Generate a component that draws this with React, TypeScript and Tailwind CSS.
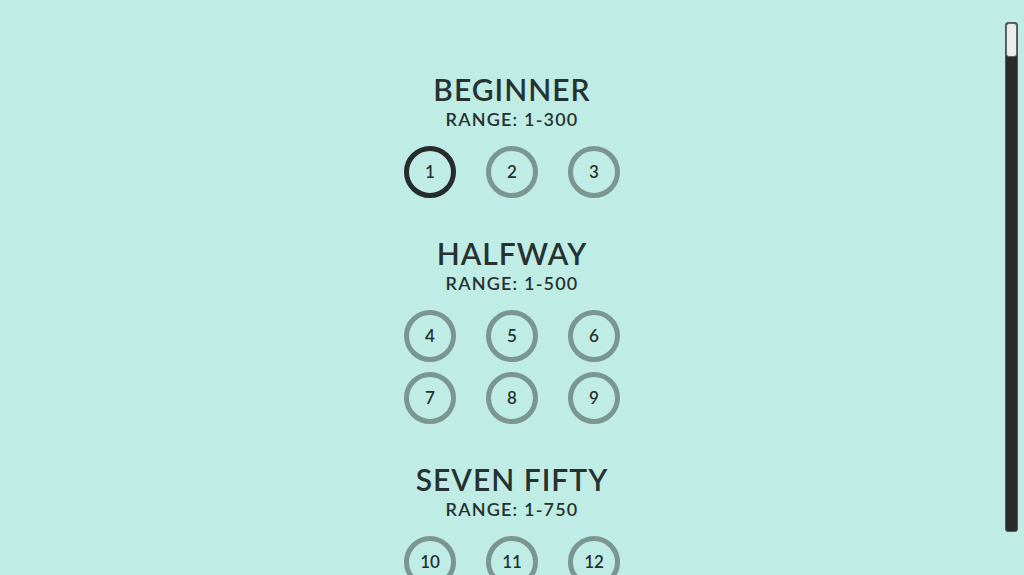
import React from 'react'

type Level = {
  title: string
  range: string
  puzzles: number[]
}

const levels: Level[] = [
  { title: 'BEGINNER', range: 'RANGE: 1-300', puzzles: [1, 2, 3] },
  { title: 'HALFWAY', range: 'RANGE: 1-500', puzzles: [4, 5, 6, 7, 8, 9] },
  { title: 'SEVEN FIFTY', range: 'RANGE: 1-750', puzzles: [10, 11, 12, 13, 14, 15] },
]

function PuzzleButton({ n, active }: { n: number; active?: boolean }) {
  return (
    <button
      className={
        'w-[52px] h-[52px] rounded-full border-[5px] flex items-center justify-center text-[17px] font-semibold text-[#263230] ' +
        (active ? 'border-[#262b2b]' : 'border-[#7b9591]')
      }
    >
      {n}
    </button>
  )
}

function LevelSection({ level, first }: { level: Level; first?: boolean }) {
  return (
    <section className={'flex flex-col items-center ' + (first ? '' : 'mt-[37px]')}>
      <h2 className="text-[30px] leading-[36px] font-semibold tracking-[1px] text-[#263230]">
        {level.title}
      </h2>
      <p className="text-[18px] leading-[24px] font-semibold tracking-[1.2px] text-[#263230]">
        {level.range}
      </p>
      <div className="mt-[15px] grid grid-cols-3 gap-x-[30px] gap-y-[10px]">
        {level.puzzles.map((n) => (
          <PuzzleButton key={n} n={n} active={n === 1} />
        ))}
      </div>
    </section>
  )
}

export default function App() {
  return (
    <div
      className="relative w-full h-[575px] overflow-hidden bg-[#bfede5]"
      style={{ fontFamily: 'Lato, "Noto Sans", sans-serif' }}
    >
      <main className="pt-[71px] flex flex-col items-center">
        {levels.map((l, i) => (
          <LevelSection key={l.title} level={l} first={i === 0} />
        ))}
      </main>

      {/* scroll bar */}
      <div className="absolute right-[6px] top-[22px] w-[13px] h-[510px] rounded-[3px] bg-[#2a2a2a] border border-[#555]">
        <div className="h-[34px] rounded-[3px] bg-[#ececec] border border-[#666]" />
      </div>
    </div>
  )
}
